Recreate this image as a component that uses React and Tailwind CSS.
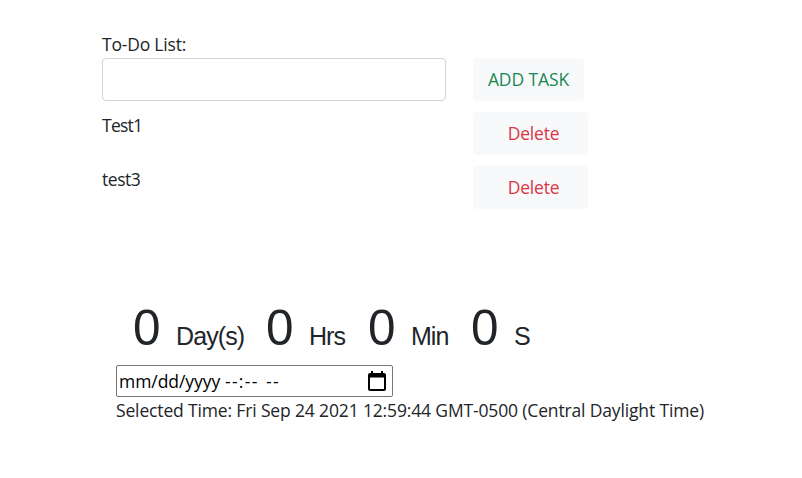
import React from "react";

const tasks = [
  { name: "Test1", tracking: "tracking-[-0.75px]" },
  { name: "test3", tracking: "tracking-[-0.45px]" },
];

function Text({ children, className }) {
  return <span className={"whitespace-nowrap " + className}>{children}</span>;
}

function Unit({ label, className, labelClass }) {
  return (
    <div className={"flex items-baseline " + className}>
      <span className="w-[43px] text-[49.5px] leading-[60px]">0</span>
      <span className={"whitespace-nowrap text-[25px] leading-[60px] " + labelClass}>{label}</span>
    </div>
  );
}

export default function App() {
  return (
    <main className="h-[478px] w-[802px] overflow-hidden bg-white pl-[102px] pt-[31px] font-['Open_Sans','Noto_Sans',sans-serif] text-[17.5px] font-normal leading-[27px] text-[#212529]">
      <label className="block tracking-[-0.2px]" htmlFor="task">To-Do List:</label>
      <div className="flex">
        <input id="task" className="h-[43px] w-[344px] rounded-[4px] border border-[#ced4da] bg-white px-3 outline-none" />
        <button className="ml-[27px] h-[43px] w-[111px] rounded-[4px] bg-[#f8f9fa] text-[#198754]">
          <Text className="tracking-[-0.1px]">ADD TASK</Text>
        </button>
      </div>
      {tasks.map(({ name, tracking }) => (
        <div key={name} className="mt-[11px] flex h-[43px]">
          <span className={"w-[371px] " + tracking}>{name}</span>
          <button className="h-[43px] w-[115px] rounded-[4px] bg-[#f8f9fa] pl-[6px] text-[#dc3545]">
            <Text className="tracking-[-0.2px]">Delete</Text>
          </button>
        </div>
      ))}
      <section className="ml-[14px] mt-[89px]">
        <div className="flex h-[67px] pl-[17px] font-['Liberation_Sans',Arial,sans-serif]">
          <Unit label="Day(s)" className="w-[133px]" labelClass="tracking-[-0.9px]" />
          <Unit label="Hrs" className="w-[102px]" labelClass="tracking-[-1px]" />
          <Unit label="Min" className="w-[103px]" labelClass="tracking-[-1px]" />
          <Unit label="S" className="" labelClass="" />
        </div>
        <div className="flex h-[32px] w-[277px] items-center justify-between rounded-[2px] border border-[#767676] pl-[2px] pr-[6px] text-black">
          <div className="flex">
            <Text className="w-[106px] tracking-[-0.05px]">mm/dd/yyyy</Text>
            <Text className="w-[41px] tracking-[1.3px]">--:--</Text>
            <Text className="tracking-[1.3px]">--</Text>
          </div>
          <svg className="h-[20px] w-[18px]" viewBox="0 0 18 20" fill="black">
            <path fillRule="evenodd" d="M3 0h2v2h8V0h2v2h1a2 2 0 0 1 2 2v14a2 2 0 0 1-2 2H2a2 2 0 0 1-2-2V4a2 2 0 0 1 2-2h1ZM2 6.5v11.5h14V6.5Z" />
          </svg>
        </div>
        <Text className="block tracking-[-0.15px]">Selected Time: Fri Sep 24 2021 12:59:44 GMT-0500 (Central Daylight Time)</Text>
      </section>
    </main>
  );
}
